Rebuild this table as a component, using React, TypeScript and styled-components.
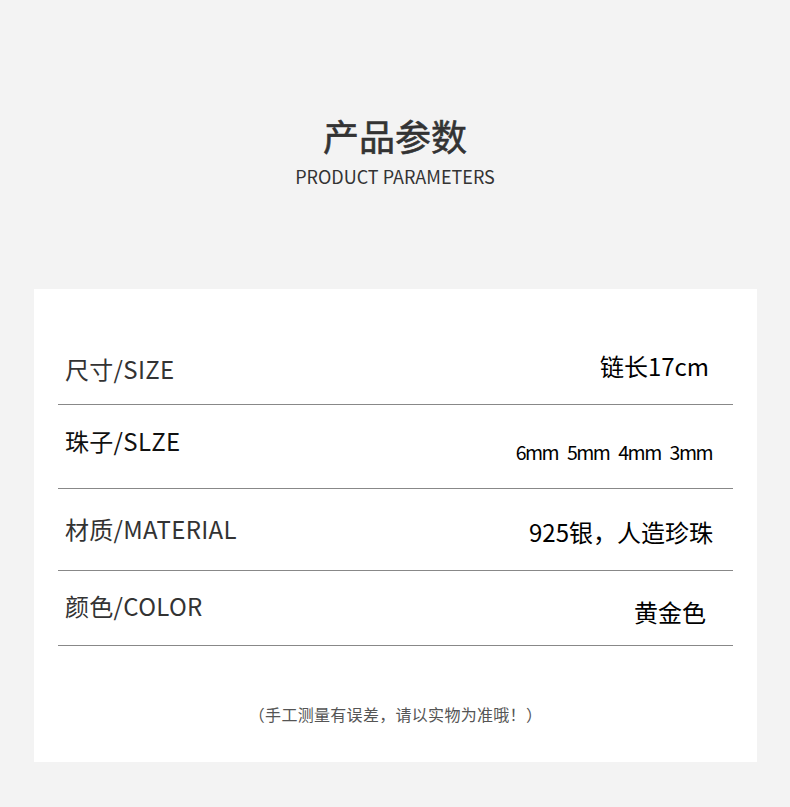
import styled, { createGlobalStyle } from 'styled-components';

const GlobalStyle = createGlobalStyle`
  body {
    margin: 0;
    background: #f3f3f3;
    font-family: 'Noto Sans CJK SC', 'Noto Sans', sans-serif;
  }
`;

const Page = styled.div`
  width: 790px;
  height: 807px;
  padding-top: 113px;
  box-sizing: border-box;
  background: #f3f3f3;
`;

const Header = styled.header`
  display: flex;
  flex-direction: column;
  align-items: center;
  gap: 7px;
  color: #333;
`;

const Title = styled.h1`
  margin: 0;
  font-size: 36px;
  line-height: 44px;
  font-weight: 400;
  -webkit-text-stroke: 0.6px #333;
`;

const Subtitle = styled.div`
  font-size: 18px;
  line-height: 24px;
`;

const Card = styled.section`
  width: 723px;
  margin: 101px 0 0 34px;
  padding: 41px 24px 36px;
  box-sizing: border-box;
  background: #fff;
`;

const Row = styled.div<{ $h: number }>`
  display: flex;
  justify-content: space-between;
  align-items: flex-start;
  height: ${p => p.$h}px;
  box-sizing: border-box;
  border-bottom: 1px solid #888;
`;

const Label = styled.div<{ $top: number; $dark?: boolean }>`
  padding: ${p => p.$top}px 0 0 7px;
  font-size: 24px;
  line-height: 28px;
  letter-spacing: 0.3px;
  color: ${p => (p.$dark ? '#111' : '#333')};
`;

const Value = styled.div<{ $top: number; $small?: boolean; $right: number }>`
  padding: ${p => p.$top}px ${p => p.$right}px 0 0;
  font-size: ${p => (p.$small ? 19.5 : 24)}px;
  line-height: 28px;
  color: #000;
  letter-spacing: ${p => (p.$small ? -1.5 : 0)}px;
  word-spacing: ${p => (p.$small ? 6 : 0)}px;
  white-space: pre;
`;

const Note = styled.p`
  margin: 56px 0 0;
  text-align: center;
  font-size: 16px;
  line-height: 24px;
  letter-spacing: 0.3px;
  color: #555;
`;

const rows = [
  { label: '尺寸/SIZE', value: '链长17cm', h: 75, lt: 25, vt: 22, right: 24 },
  { label: '珠子/SLZE', value: '6mm 5mm 4mm 3mm', h: 84, lt: 22, vt: 33, small: true, dark: true, right: 21 },
  { label: '材质/MATERIAL', value: '925银，人造珍珠', h: 82, lt: 26, vt: 29, right: 20 },
  { label: '颜色/COLOR', value: '黄金色', h: 75, lt: 21, vt: 27, right: 27 },
];

export default function App() {
  return (
    <Page>
      <GlobalStyle />
      <Header>
        <Title>产品参数</Title>
        <Subtitle>PRODUCT PARAMETERS</Subtitle>
      </Header>
      <Card>
        {rows.map(r => (
          <Row key={r.label} $h={r.h}>
            <Label $top={r.lt} $dark={r.dark}>
              {r.label}
            </Label>
            <Value $top={r.vt} $small={r.small} $right={r.right}>
              {r.value}
            </Value>
          </Row>
        ))}
        <Note>（手工测量有误差，请以实物为准哦！）</Note>
      </Card>
    </Page>
  );
}
